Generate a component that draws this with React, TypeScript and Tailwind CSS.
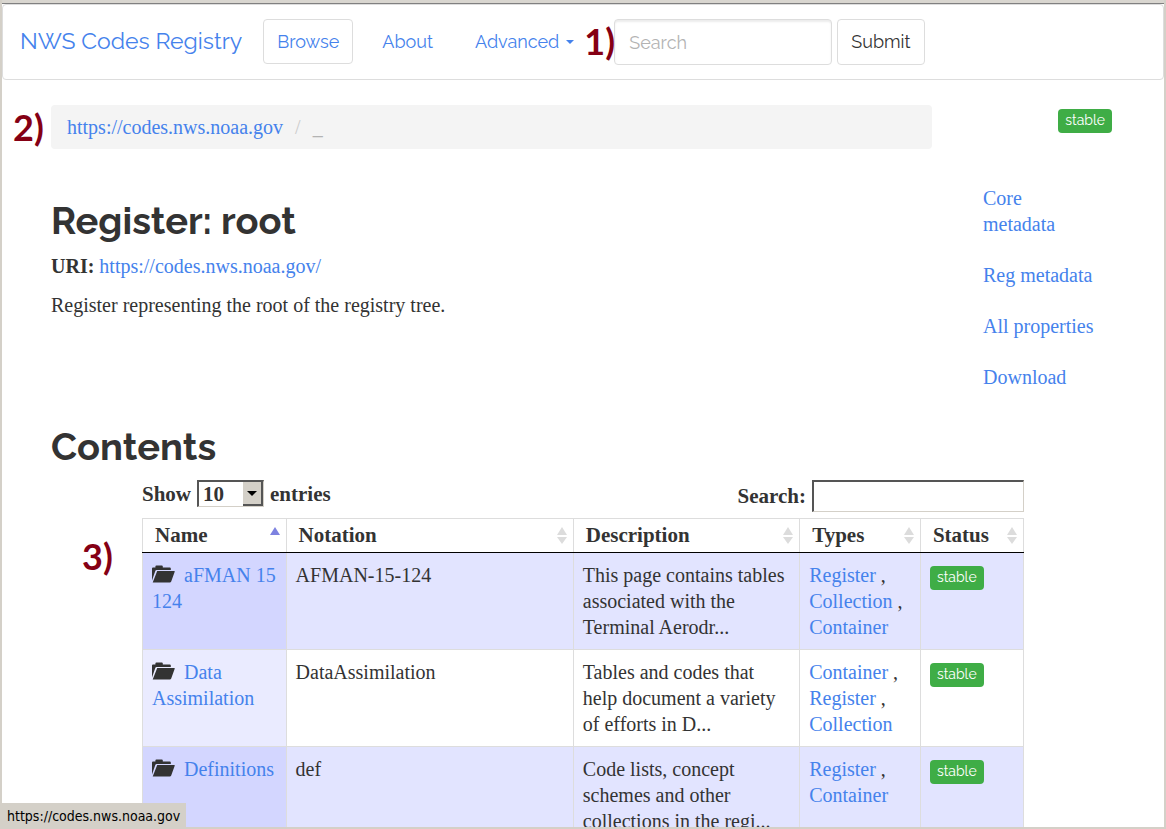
import React from 'react';

const serif = "font-['Georgia','Liberation_Serif',serif]";
const sans = "font-['Raleway','Lato',sans-serif]";
const link = 'text-[#4582ec] hover:underline';

type Row = { name: string; notation: string; description: string; types: string[] };

const rows: Row[] = [
  {
    name: 'aFMAN 15 124',
    notation: 'AFMAN-15-124',
    description: 'This page contains tables associated with the Terminal Aerodr...',
    types: ['Register', 'Collection', 'Container'],
  },
  {
    name: 'Data Assimilation',
    notation: 'DataAssimilation',
    description: 'Tables and codes that help document a variety of efforts in D...',
    types: ['Container', 'Register', 'Collection'],
  },
  {
    name: 'Definitions',
    notation: 'def',
    description: 'Code lists, concept schemes and other collections in the regi...',
    types: ['Register', 'Container'],
  },
];

const columns = ['Name', 'Notation', 'Description', 'Types', 'Status'];

function FolderIcon() {
  return (
    <svg width="23" height="18" viewBox="0 0 23 18" className="mr-1 inline-block align-[-1px]" aria-hidden="true">
      <path d="M0 15.5V3.4Q0 2.4 1 2.4H3.4V1.6Q3.4 .6 4.4 .6H9.8Q10.8 .6 10.8 1.6V2.4H17.8Q18.8 2.4 18.8 3.4V5H4.6Q3.6 5 3.2 6.2Z" fill="#333" />
      <path d="M5.2 6H22.3Q23 6 22.7 6.8L19.2 16.6Q18.8 17.6 17.8 17.6H.7Z" fill="#333" />
    </svg>
  );
}

function SortIcon({ active }: { active: boolean }) {
  return (
    <svg width="10" height="18" viewBox="0 0 10 18" className="shrink-0" aria-hidden="true">
      <path d="M5 0L10 8H0Z" fill={active ? '#7d82e0' : '#dcdcdc'} />
      {!active && <path d="M0 10H10L5 17Z" fill="#dcdcdc" />}
    </svg>
  );
}

function Badge() {
  return (
    <span className={`inline-block h-6 rounded bg-[#3fad46] px-[7px] text-sm leading-[22px] text-white ${sans}`}>
      stable
    </span>
  );
}

function Marker({ children, className }: { children: React.ReactNode; className: string }) {
  return (
    <span className={`absolute font-['Lato',sans-serif] text-[36px] font-bold leading-10 text-[#850014] ${className}`}>
      {children}
    </span>
  );
}

function NavBar() {
  return (
    <nav className={`flex items-start rounded border border-[#ddd] px-[17px] pb-3.5 pt-3.5 text-lg ${sans}`}>
      <a href="#home" className="mr-[21px] text-[23px] leading-[43px] text-[#4582ec]">
        NWS Codes Registry
      </a>
      <a href="#browse" className="rounded border border-[#ddd] px-[13px] leading-[43px] text-[#4582ec]">
        Browse
      </a>
      <a href="#about" className="ml-[29px] leading-[45px] text-[#4582ec]">
        About
      </a>
      <button type="button" className="ml-[42px] flex items-center gap-[7px] leading-[45px] text-[#4582ec]">
        Advanced
        <svg width="8" height="4" viewBox="0 0 8 4" aria-hidden="true">
          <path d="M0 0H8L4 4Z" fill="currentColor" />
        </svg>
      </button>
      <form className="relative ml-10 flex gap-[5px]" onSubmit={(e) => e.preventDefault()}>
        <Marker className="-left-[30px] top-0.5">1)</Marker>
        <input
          type="text"
          aria-label="Search the registry"
          placeholder="Search"
          className="h-[46px] w-[218px] rounded border border-[#ddd] px-3.5 shadow-[inset_0_2px_2px_rgba(0,0,0,0.08)] placeholder:text-[#b3b3b3]"
        />
        <button type="submit" className="h-[46px] rounded border border-[#ddd] px-[13px] text-[#333]">
          Submit
        </button>
      </form>
    </nav>
  );
}

function Controls() {
  return (
    <div className="mb-1.5 flex items-start justify-between text-[21px] font-bold">
      <div className="flex items-center gap-1.5">
        <label htmlFor="page-size">Show</label>
        <div className="relative">
          <select
            id="page-size"
            defaultValue="10"
            className="block h-[27px] w-[67px] appearance-none border-2 border-b border-r border-b-[#d4d0c8] border-l-[#555] border-r-[#d4d0c8] border-t-[#555] bg-white pl-1 font-bold leading-6"
          >
            <option>10</option>
            <option>25</option>
            <option>50</option>
          </select>
          <span className="pointer-events-none absolute bottom-px right-px top-0.5 flex w-5 items-center justify-center border-b-2 border-r-2 border-[#555] bg-[#d4d0c8]">
            <svg width="10" height="5" viewBox="0 0 10 5" aria-hidden="true">
              <path d="M0 0H10L5 5Z" fill="#000" />
            </svg>
          </span>
        </div>
        <span>entries</span>
      </div>
      <div className="flex items-center gap-1.5">
        <label htmlFor="filter">Search:</label>
        <input
          id="filter"
          type="search"
          className="h-8 w-[212px] border-2 border-b border-r border-b-[#d4d0c8] border-l-[#555] border-r-[#d4d0c8] border-t-[#555] px-1 font-normal"
        />
      </div>
    </div>
  );
}

function CodesTable() {
  return (
    <table className="w-full table-fixed border-collapse border border-[#ddd]">
      <colgroup>
        <col className="w-[16.3%]" />
        <col className="w-[32.6%]" />
        <col className="w-[25.7%]" />
        <col className="w-[13.7%]" />
        <col className="w-[11.7%]" />
      </colgroup>
      <thead>
        <tr>
          {columns.map((c, i) => (
            <th key={c} className="border-x border-b border-x-[#ddd] border-b-black py-1 pl-3 pr-1.5 text-left text-[21px] font-bold">
              <div className="flex items-center justify-between leading-[25px]">
                {c}
                <SortIcon active={i === 0} />
              </div>
            </th>
          ))}
        </tr>
      </thead>
      <tbody>
        {rows.map((r) => (
          <tr key={r.name} className="border-b border-[#ddd] align-top odd:bg-[#e2e4ff]">
            <td className={`border-x border-[#ddd] py-[9px] pl-[9px] pr-1 ${r.name.startsWith('Data') ? 'bg-[#eaebff]' : 'bg-[#d3d6ff]'}`}>
              <FolderIcon />{' '}
              <a href="#entry" className={link}>{r.name}</a>
            </td>
            <td className="border-x border-[#ddd] px-[9px] py-[9px]">{r.notation}</td>
            <td className="border-x border-[#ddd] px-[9px] py-[9px]">{r.description}</td>
            <td className="border-x border-[#ddd] px-[9px] py-[9px]">
              {r.types.map((t, i) => (
                <div key={t}>
                  <a href="#type" className={link}>{t}</a>
                  {i < r.types.length - 1 && ' ,'}
                </div>
              ))}
            </td>
            <td className="border-x border-[#ddd] px-[9px] py-[9px]">
              <Badge />
            </td>
          </tr>
        ))}
      </tbody>
    </table>
  );
}

export default function App() {
  return (
    <div className={`relative flex h-screen flex-col overflow-hidden border-x-2 border-b-2 border-[#d4d0c8] bg-white text-[20px] leading-[26px] text-[#333] ${serif}`}>
      <div className="h-1 shrink-0 border-b border-[#808080] bg-[#d9d6d0]" />
      <NavBar />
      <div className="pl-[49px] pr-[52px] pt-[25px]">
        <div className="flex items-start">
          <div className="relative min-w-0 flex-1">
            <Marker className="-left-[38px] top-0.5">2)</Marker>
            <div className="flex h-11 items-center gap-3 rounded bg-[#f4f4f4] px-4">
              <a href="#root" className={link}>https://codes.nws.noaa.gov</a>
              <span className="text-[#ccc]">/</span>
              <span className="text-[#b3b3b3]">_</span>
            </div>
          </div>
          <div className="flex w-[180px] justify-end pt-1">
            <Badge />
          </div>
        </div>

        <div className="mt-9 flex items-start">
          <div className="min-w-0 flex-1 pt-3.5">
            <h1 className={`text-[38px] font-bold leading-[44px] ${sans}`}>Register: root</h1>
            <p className="mt-2.5">
              <strong>URI:</strong>{' '}
              <a href="#uri" className={link}>https://codes.nws.noaa.gov/</a>
            </p>
            <p className="mt-[13px]">Register representing the root of the registry tree.</p>
          </div>
          <ul className="mr-[18px] flex w-[111px] flex-col gap-[25px] whitespace-nowrap">
            <li><a href="#core" className={link}>Core<br />metadata</a></li>
            <li><a href="#reg" className={link}>Reg metadata</a></li>
            <li><a href="#all" className={link}>All properties</a></li>
            <li><a href="#download" className={link}>Download</a></li>
          </ul>
        </div>

        <h2 className={`mt-[35px] text-[38px] font-bold leading-[44px] ${sans}`}>Contents</h2>
        <div className="relative ml-[91px] mr-[88px] mt-[11px]">
          <Marker className="-left-[60px] top-14">3)</Marker>
          <Controls />
          <CodesTable />
        </div>
      </div>
      <div className="absolute -bottom-0.5 -left-0.5 bg-[#d4d0c8] pl-[7px] pr-1.5 font-['Tahoma','DejaVu_Sans_Condensed',sans-serif] text-sm leading-[26px] text-black">
        https://codes.nws.noaa.gov
      </div>
    </div>
  );
}
